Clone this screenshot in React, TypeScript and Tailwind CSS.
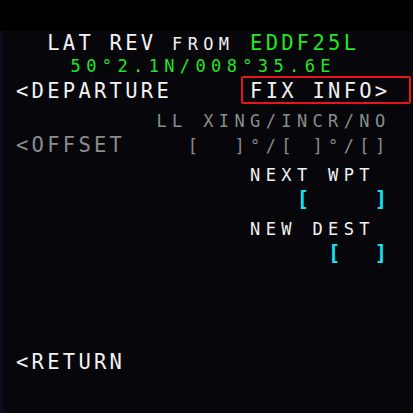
import React from "react";

const big = "text-[20.5px] tracking-[3.26px]";
const small = "text-[17px] tracking-[5.37px] leading-[20px]";

const Row = ({ h, children }: { h: string; children: React.ReactNode }) => (
  <div className={`${h} whitespace-pre leading-[26px] ${big}`}>{children}</div>
);

const App = () => {
  return (
    <div
      className="w-[413px] h-[413px] bg-black flex flex-col overflow-hidden"
      style={{ fontFamily: '"DejaVu Sans Mono", "Liberation Mono", monospace' }}
    >
      <div className="h-[31px] shrink-0 bg-black" />
      <div className="flex-1 bg-[#06060b] border-l-[3px] border-[#0a0e1a] pl-[13px] text-[#f2f2f2]">
        {/* title */}
        <div className={`h-[21px] whitespace-pre leading-[24px] ${big}`}>
          {"  LAT REV "}
          <span className={small}>FROM</span>
          {" "}
          <span className="text-[#22e622]">EDDF25L</span>
        </div>

        <Row h="h-[26px]">
          <span className={`${small} text-[#22e622] ml-[7.8px]`}>{"   50°2.1N/008°35.6E"}</span>
        </Row>

        {/* line 1 */}
        <Row h="h-[29px]">
          {"<DEPARTURE     "}
          <span className="relative inline-block">
            FIX INFO&gt;
            <span className="absolute -left-[9px] -right-[21px] -top-[2px] bottom-0 border-2 border-[#e8141c] rounded-[2px]" />
          </span>
        </Row>

        {/* line 2 */}
        <Row h="h-[25px]">
          <span className={`${small} text-[#8c8c8c]`}>{"         LL XING/INCR/NO"}</span>
        </Row>
        <Row h="h-[29px]">
          <span className="text-[#8c8c8c]">{"<OFFSET    "}</span>
          <span className={`${small} text-[#8c8c8c]`}>{"[  ]°/[ ]°/[]"}</span>
        </Row>

        {/* line 3 */}
        <Row h="h-[25px]">
          <span className={small}>{"               NEXT WPT"}</span>
        </Row>
        <Row h="h-[29px]">
          <span className="text-[#18e0f0] font-bold">{"                  [    ]"}</span>
        </Row>

        {/* line 4 */}
        <Row h="h-[25px]">
          <span className={small}>{"               NEW DEST"}</span>
        </Row>
        <Row h="h-[109px]">
          <span className="text-[#18e0f0] font-bold">{"                    [  ]"}</span>
        </Row>

        {/* line 6 */}
        <Row h="h-[26px]">{"<RETURN"}</Row>
      </div>
    </div>
  );
};

export default App;
